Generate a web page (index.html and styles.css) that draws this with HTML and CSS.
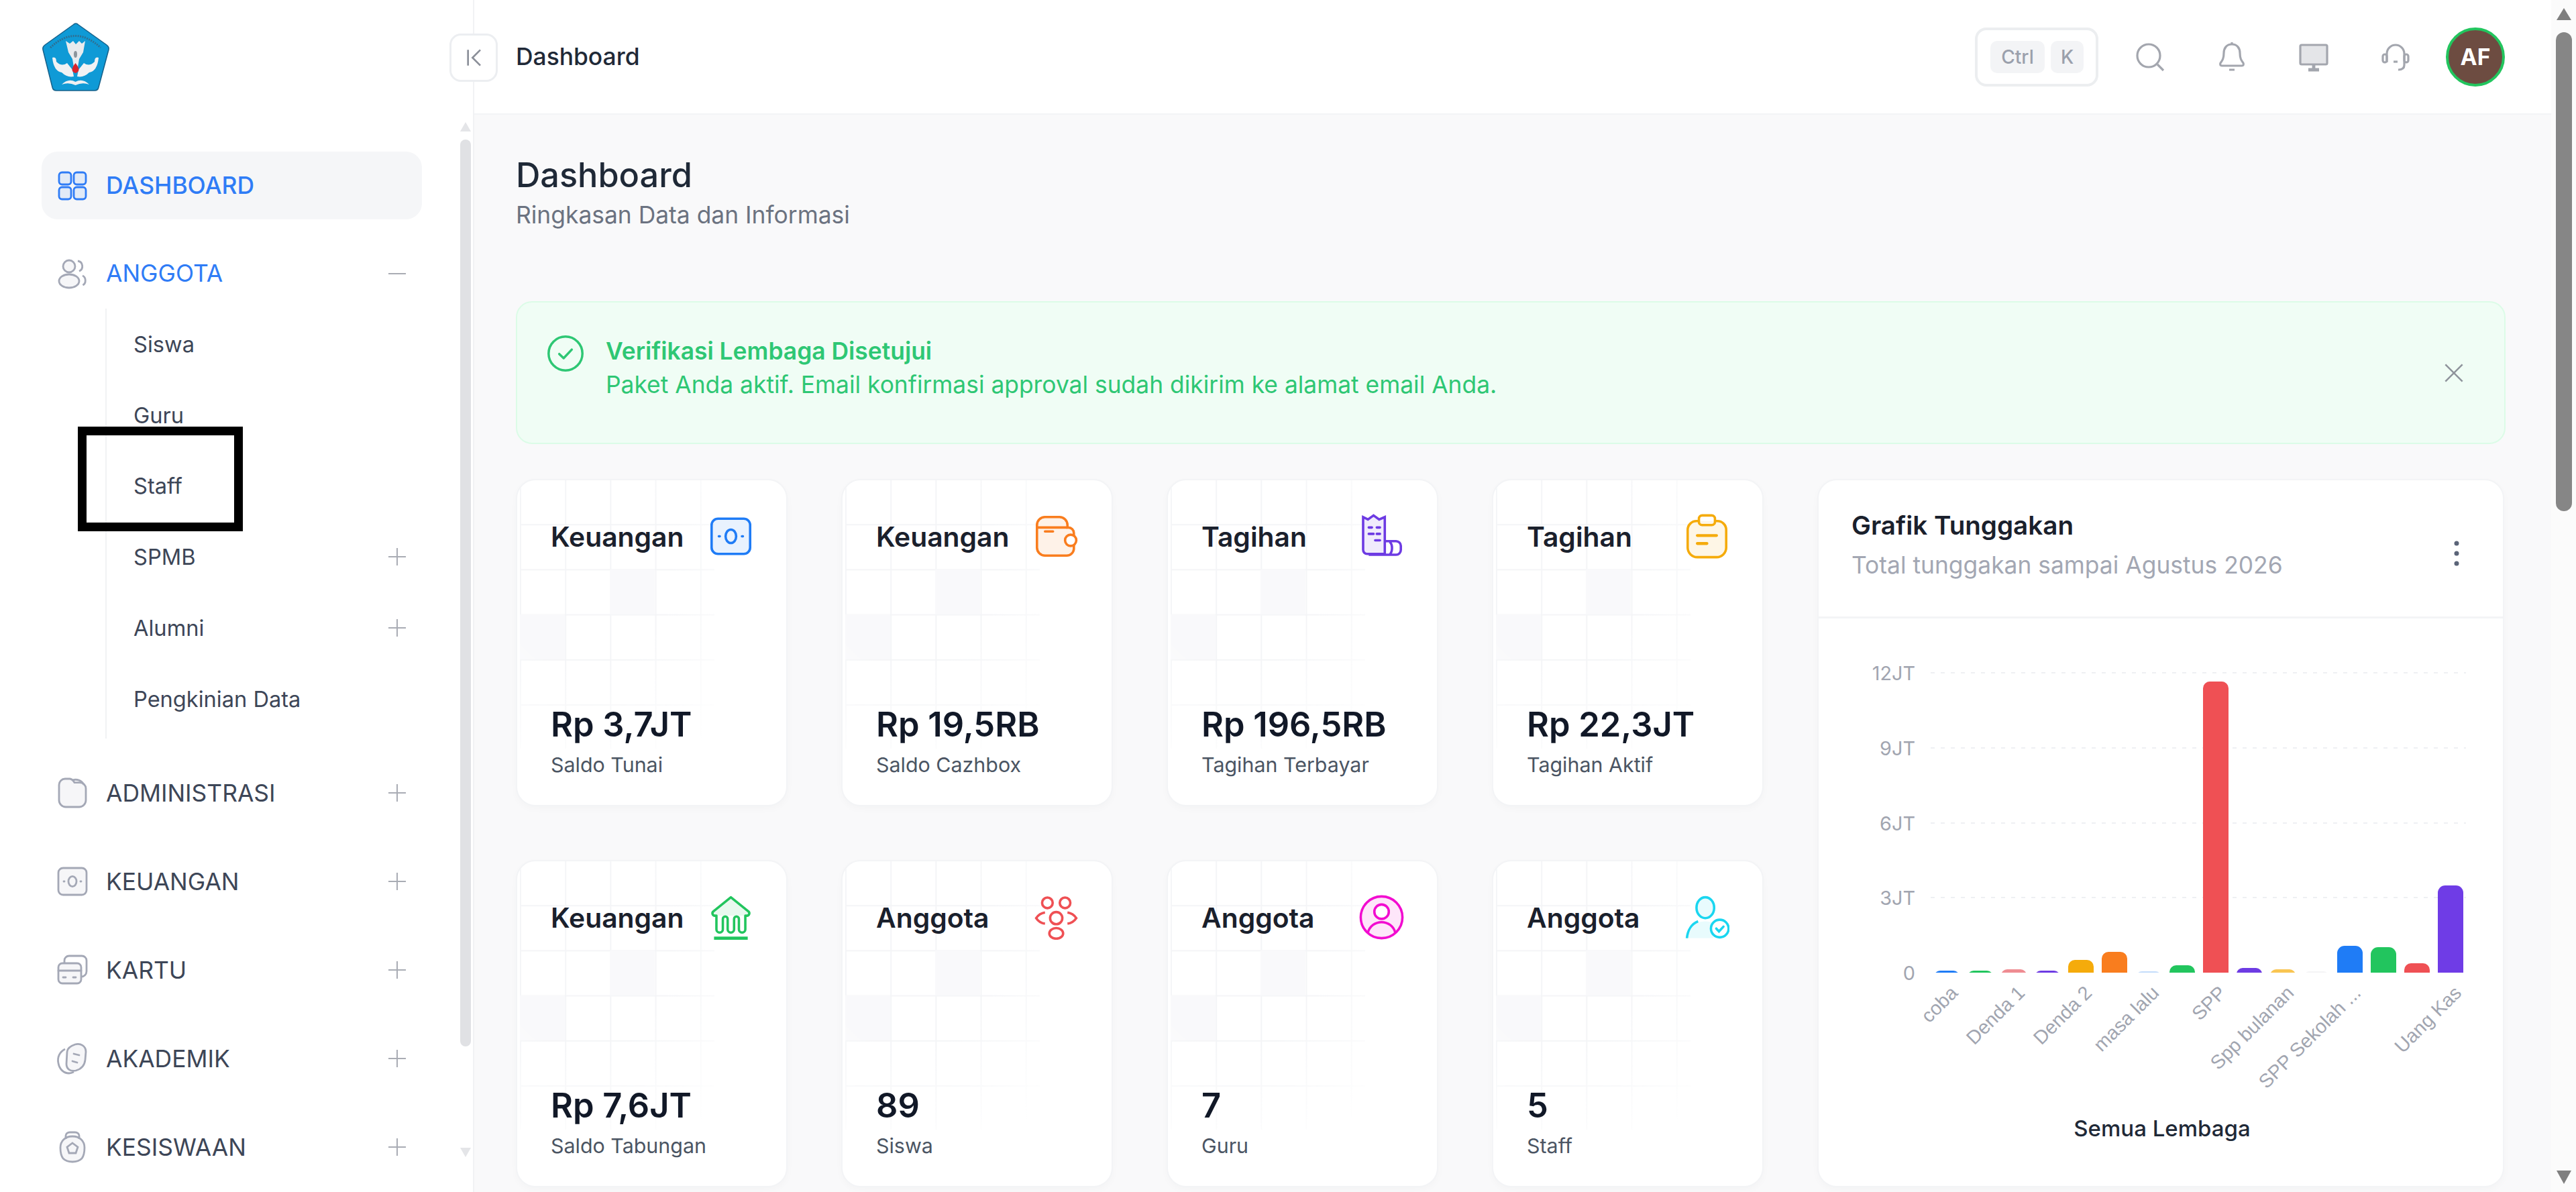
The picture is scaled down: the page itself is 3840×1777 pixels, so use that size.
FILE: index.html
```html
<!DOCTYPE html>
<html lang="id">
<head>
    <meta charset="UTF-8">
    <meta name="viewport" content="width=device-width, initial-scale=1.0">
    <title>Dashboard</title>
    <link rel="stylesheet" href="styles.css">
</head>
<body>
    <aside class="sidebar">
        <svg class="logo" viewBox="0 0 102 104">
            <path d="M51 1Q53 1 55 3L97 33Q101 36 100 40L85 96Q84 101 79 101L22 101Q17 101 16 96L2 40Q1 36 5 33L47 3Q49 1 51 1Z" fill="#0f9ad6" stroke="#17618a" stroke-width="1.5"/>
            <path d="M13 37Q50 2 88 37" fill="none" stroke="#2f6f92" stroke-width="3" stroke-dasharray="2 1.500"/>
            <path d="M36 27L42 31L47 27L51 32L56 27L60 31L65 27L62 44L56 54L54 66H48L46 54L40 44Z" fill="#e8ebee"/>
            <ellipse cx="50.500" cy="47" rx="2.500" ry="5" fill="#8c959c"/>
            <path d="M16 52Q22 50 22 58Q30 66 38 60L46 70L48 80Q38 82 30 74Q18 72 16 52Z" fill="#f0f2f4"/>
            <path d="M85 52Q79 50 79 58Q71 66 63 60L55 70L53 80Q63 82 71 74Q83 72 85 52Z" fill="#f0f2f4"/>
            <path d="M50.500 60Q57 68 55 72Q50.500 78 46 72Q44 68 50.500 60Z" fill="#d8242c"/>
            <path d="M30 92Q40 82 50.500 88Q61 82 71 92Q61 88 50.500 93Q40 88 30 92Z" fill="#eef0f2"/>
        </svg>

        <ul class="nav">
            <li class="nav-item nav-active">
                <svg class="nav-icon" viewBox="0 0 24 24" fill="currentColor" fill-opacity=".1" stroke="currentColor" stroke-width="1.4">
                    <rect x="2" y="2" width="9" height="9" rx="2.2"/><rect x="13" y="2" width="9" height="9" rx="2.2"/>
                    <rect x="2" y="13" width="9" height="9" rx="2.2"/><rect x="13" y="13" width="9" height="9" rx="2.2"/>
                </svg>
                <span>DASHBOARD</span>
            </li>
            <li class="nav-item nav-open">
                <svg class="nav-icon icon-gray" viewBox="0 0 24 24" fill="currentColor" fill-opacity=".1" stroke="currentColor" stroke-width="1.4">
                    <circle cx="9.5" cy="6.5" r="4.5"/><ellipse cx="9.5" cy="17.5" rx="7.5" ry="5"/>
                    <path d="M16 2.5a4 4 0 0 1 1 7.6M19.5 13.5c2.6 1 3 5.6 .2 7" fill="none"/>
                </svg>
                <span>ANGGOTA</span>
                <i class="toggle toggle-minus"></i>
            </li>
            <li>
                <ul class="subnav">
                    <li class="sub-item">Siswa</li>
                    <li class="sub-item">Guru</li>
                    <li class="sub-item">Staff</li>
                    <li class="sub-item"><span>SPMB</span><i class="toggle"></i></li>
                    <li class="sub-item"><span>Alumni</span><i class="toggle"></i></li>
                    <li class="sub-item">Pengkinian Data</li>
                </ul>
            </li>
            <li class="nav-item nav-group">
                <svg class="nav-icon icon-gray" viewBox="0 0 24 24" fill="currentColor" fill-opacity=".1" stroke="currentColor" stroke-width="1.4">
                    <path d="M2 6a4.500 4.500 0 0 1 4.500-4.500H10c1.500 0 2 .8 2.800 1.800l.7 1h4A4.500 4.500 0 0 1 22 8.800v8.700a5 5 0 0 1-5 5H7a5 5 0 0 1-5-5Z"/>
                    <path d="M12 2.500c3-1 7 0 8.500 3.500" fill="none"/>
                </svg>
                <span>ADMINISTRASI</span>
                <i class="toggle"></i>
            </li>
            <li class="nav-item nav-group">
                <svg class="nav-icon icon-gray" viewBox="0 0 24 24" fill="currentColor" fill-opacity=".1" stroke="currentColor" stroke-width="1.4">
                    <rect x="1.500" y="2" width="21" height="20" rx="3.500"/><ellipse cx="12" cy="12" rx="3" ry="3.800" fill="none"/>
                    <path d="M5.500 12h.5M18 12h.5" fill="none" stroke-linecap="round"/>
                </svg>
                <span>KEUANGAN</span>
                <i class="toggle"></i>
            </li>
            <li class="nav-item nav-group">
                <svg class="nav-icon icon-gray" viewBox="0 0 24 24" fill="none" stroke="currentColor" stroke-width="1.4">
                    <rect x="1.500" y="7" width="17" height="15" rx="3" fill="currentColor" fill-opacity=".1"/>
                    <path d="M1.500 12.500h17M5 17.500h2M12.500 17.500h2" stroke-linecap="round"/>
                    <path d="M6 6.500V5a3.500 3.500 0 0 1 3.500-3.500h9.500A3.500 3.500 0 0 1 22.500 5v8a4 4 0 0 1-4 4"/>
                </svg>
                <span>KARTU</span>
                <i class="toggle"></i>
            </li>
            <li class="nav-item nav-group">
                <svg class="nav-icon icon-gray" viewBox="0 0 24 24" fill="none" stroke="currentColor" stroke-width="1.4">
                    <path d="M14 1.500c4-1 8 1 8 5.500l-.5 6c-.5 5-3.500 7-7 8-4 .8-7-1-7-5l.5-9c.2-3 3-4.500 6-5.500Z" fill="currentColor" fill-opacity=".1"/>
                    <path d="M6.500 5C2.500 7 .5 11 1.500 15.500c.8 4.500 4 7.500 8 7.500 1.500 0 2.500-.5 3.500-1"/>
                    <path d="M13 8.500l4 1M12 14l3.500 1" stroke-linecap="round"/>
                </svg>
                <span>AKADEMIK</span>
                <i class="toggle"></i>
            </li>
            <li class="nav-item nav-group">
                <svg class="nav-icon icon-gray" viewBox="0 0 24 24" fill="none" stroke="currentColor" stroke-width="1.400">
                    <path d="M7 6V3.500C7 2 8.500 1 10 1h4c1.500 0 3 1 3 2.500V6"/>
                    <path d="M12 4c5.500 0 9 3.500 9 8.500 0 3-.5 6-2 8-2 2-4.500 2.500-7 2.500s-5-.5-7-2.500c-1.500-2-2-5-2-8C3 7.500 6.500 4 12 4Z" fill="currentColor" fill-opacity=".1"/>
                    <path d="M12 9l4 3-1.500 4.500h-5L8 12Z"/>
                </svg>
                <span>KESISWAAN</span>
                <i class="toggle"></i>
            </li>
        </ul>

        <div class="side-scroll">
            <i class="arrow-up"></i>
            <i class="side-thumb"></i>
            <i class="arrow-down"></i>
        </div>
        <div class="mark-box"></div>
    </aside>

    <div class="main">
        <header class="topbar">
            <button class="collapse-btn">
                <svg viewBox="0 0 24 24" fill="none" stroke="#8b8f99" stroke-width="1.600"><path d="M7 5v14M18 5l-7 7 7 7"/></svg>
            </button>
            <div class="crumb">Dashboard</div>
            <div class="shortcut"><kbd class="key-ctrl">Ctrl</kbd><kbd class="key-k">K</kbd></div>
            <svg class="top-icon" viewBox="0 0 24 24" fill="none" stroke="#a3a6ae" stroke-width="1.600">
                <circle cx="11" cy="11" r="8.500"/><path d="M17.500 17.500l4.500 4.500"/>
            </svg>
            <svg class="top-icon" viewBox="0 0 24 24" fill="none" stroke="#a3a6ae" stroke-width="1.600">
                <path d="M12 2.500c-4 0-6 3-6 6.500 0 4-1 5.500-2.500 7.500-.6 1 0 2 1 2h15c1 0 1.600-1 1-2C19 14.500 18 13 18 9c0-3.500-2-6.500-6-6.500Z"/>
                <path d="M10 21.500h4M12 1v1.500"/>
            </svg>
            <svg class="top-icon" viewBox="0 0 24 24" fill="none" stroke="#a3a6ae" stroke-width="1.600">
                <rect x="2" y="3" width="20" height="14.500" rx="1" fill="#c4c6cc" fill-opacity=".45"/>
                <path d="M12 17.500v3M8 21.500h8" stroke-width="2.400"/>
            </svg>
            <svg class="top-icon top-icon-last" viewBox="0 0 24 24" fill="none" stroke="#a3a6ae" stroke-width="1.600">
                <path d="M5.500 16V9.500a6.500 6.500 0 0 1 13 0V18c0 2.500-2 3.500-4.500 3.500"/>
                <rect x="2.500" y="10" width="3" height="6" rx="1.500"/><rect x="18.500" y="10" width="3" height="6" rx="1.500"/>
                <path d="M10.500 15.500h3"/>
            </svg>
            <div class="avatar">AF</div>
        </header>

        <main class="content">
            <h1 class="page-title">Dashboard</h1>
            <p class="page-sub">Ringkasan Data dan Informasi</p>

            <div class="alert">
                <svg class="alert-icon" viewBox="0 0 24 24" fill="none" stroke="currentColor" stroke-width="1.500">
                    <circle cx="12" cy="12" r="10.800"/><path d="M8 12.300l2.800 2.700 5.200-5.500" stroke-linecap="round" stroke-linejoin="round"/>
                </svg>
                <div class="alert-text">
                    <div class="alert-title">Verifikasi Lembaga Disetujui</div>
                    <div>Paket Anda aktif. Email konfirmasi approval sudah dikirim ke alamat email Anda.</div>
                </div>
                <svg class="alert-close" viewBox="0 0 24 24" fill="none" stroke="#8f949c" stroke-width="1.600"><path d="M4 4l16 16M20 4L4 20"/></svg>
            </div>

            <div class="grid">
                <div class="stat-card">
                    <div class="stat-head">
                        <span class="stat-title">Keuangan</span>
                        <svg class="stat-icon c-blue" viewBox="0 0 28 28" fill="none" stroke="currentColor" stroke-width="1.500">
                            <rect x="2" y="3" width="24" height="22" rx="4" fill="currentColor" fill-opacity=".1"/>
                            <ellipse cx="14" cy="14" rx="3.300" ry="4.200"/><path d="M6.500 14h.6M20.900 14h.6" stroke-linecap="round"/>
                        </svg>
                    </div>
                    <div class="stat-value">Rp 3,7JT</div>
                    <div class="stat-label">Saldo Tunai</div>
                </div>
                <div class="stat-card">
                    <div class="stat-head">
                        <span class="stat-title">Keuangan</span>
                        <svg class="stat-icon c-orange" viewBox="0 0 28 28" fill="none" stroke="currentColor" stroke-width="1.500">
                            <path d="M2 7a5 5 0 0 1 5-5h9a5 5 0 0 1 5 5v1.500h.5A3.500 3.500 0 0 1 25 12v10a4.500 4.500 0 0 1-4.500 4H7a5 5 0 0 1-5-5Z" fill="currentColor" fill-opacity=".1"/>
                            <path d="M2.500 8.500H21M7 11h5" stroke-linecap="round"/>
                            <circle cx="23" cy="16.500" r="3.500" fill="#fff"/>
                        </svg>
                    </div>
                    <div class="stat-value">Rp 19,5RB</div>
                    <div class="stat-label">Saldo Cazhbox</div>
                </div>
                <div class="stat-card">
                    <div class="stat-head">
                        <span class="stat-title">Tagihan</span>
                        <svg class="stat-icon c-purple" viewBox="0 0 28 28" fill="none" stroke="currentColor" stroke-width="1.500">
                            <path d="M2.500 2l3 1.500L9 1l3.500 2.500L16 2v23H5a2.500 2.500 0 0 1-2.500-2.500Z" fill="currentColor" fill-opacity=".1"/>
                            <path d="M16 17h7a3 3 0 0 1 3 3v2.500a3 3 0 0 1-3 3H6M19 17.500c2 1.500 2 6 0 8"/>
                            <path d="M6 8.500h2M11 8.500h2M6 12.500h3M11 12.500h2M10 16.500h3" stroke-linecap="round"/>
                        </svg>
                    </div>
                    <div class="stat-value">Rp 196,5RB</div>
                    <div class="stat-label">Tagihan Terbayar</div>
                </div>
                <div class="stat-card">
                    <div class="stat-head">
                        <span class="stat-title">Tagihan</span>
                        <svg class="stat-icon c-amber" viewBox="0 0 28 28" fill="none" stroke="currentColor" stroke-width="1.500">
                            <path d="M9 4.500H7.500A5.500 5.500 0 0 0 2 10v11a6 6 0 0 0 6 6h12a6 6 0 0 0 6-6V10a5.500 5.500 0 0 0-5.500-5.500H19" fill="currentColor" fill-opacity=".1"/>
                            <rect x="9" y="1" width="10" height="6" rx="2"/>
                            <path d="M8 13.500h12M8 18.500h6" stroke-linecap="round" stroke-width="1.800"/>
                        </svg>
                    </div>
                    <div class="stat-value">Rp 22,3JT</div>
                    <div class="stat-label">Tagihan Aktif</div>
                </div>

                <section class="chart-card">
                    <div class="chart-head">
                        <div>
                            <h2 class="chart-title">Grafik Tunggakan</h2>
                            <p class="chart-sub">Total tunggakan sampai Agustus 2026</p>
                        </div>
                        <svg class="kebab" viewBox="0 0 10 40" fill="#5b6478"><circle cx="5" cy="5" r="3.500"/><circle cx="5" cy="20" r="3.500"/><circle cx="5" cy="35" r="3.500"/></svg>
                    </div>
                    <svg class="chart" viewBox="0 0 1024 852">
                        <defs><clipPath id="above-axis"><rect x="0" y="0" width="1024" height="530"/></clipPath></defs>
                        <g class="grid-lines">
                            <line x1="169" x2="967" y1="83" y2="83"/>
                            <line x1="169" x2="967" y1="195" y2="195"/>
                            <line x1="169" x2="967" y1="307" y2="307"/>
                            <line x1="169" x2="967" y1="418" y2="418"/>
                        </g>
                        <g class="y-labels">
                            <text x="146" y="94">12JT</text>
                            <text x="146" y="206">9JT</text>
                            <text x="146" y="318">6JT</text>
                            <text x="146" y="429">3JT</text>
                            <text x="146" y="541">0</text>
                        </g>
                        <g clip-path="url(#above-axis)">
                            <rect x="174" y="527" width="38" height="23" rx="9" fill="#1f7cf6"/>
                            <rect x="224" y="527" width="38" height="23" rx="9" fill="#22c55e"/>
                            <rect x="274" y="525" width="38" height="23" rx="9" fill="#ef8c92"/>
                            <rect x="324" y="527" width="38" height="23" rx="9" fill="#6d3be3"/>
                            <rect x="374" y="511" width="38" height="39" rx="10" fill="#f5ab0b"/>
                            <rect x="424" y="499" width="38" height="51" rx="10" fill="#f97d1e"/>
                            <rect x="475" y="528" width="38" height="22" rx="9" fill="#c3dcfb"/>
                            <rect x="525" y="519" width="38" height="31" rx="10" fill="#22c55e"/>
                            <rect x="575" y="96" width="38" height="454" rx="10" fill="#ef5054"/>
                            <rect x="625" y="523" width="38" height="27" rx="9" fill="#6d3be3"/>
                            <rect x="675" y="525" width="38" height="25" rx="9" fill="#f9c552"/>
                            <rect x="725" y="528" width="38" height="22" rx="9" fill="#f4f4f5"/>
                            <rect x="775" y="490" width="38" height="60" rx="11" fill="#1f7cf6"/>
                            <rect x="825" y="492" width="38" height="58" rx="11" fill="#22c55e"/>
                            <rect x="875" y="516" width="38" height="34" rx="10" fill="#ef5054"/>
                            <rect x="925" y="400" width="38" height="150" rx="11" fill="#6f3ce6"/>
                        </g>
                        <g class="x-labels">
                            <text transform="translate(211 562) rotate(-45)">coba</text>
                            <text transform="translate(311 562) rotate(-45)">Denda 1</text>
                            <text transform="translate(411 562) rotate(-45)">Denda 2</text>
                            <text transform="translate(511 562) rotate(-45)">masa lalu</text>
                            <text transform="translate(611 562) rotate(-45)">SPP</text>
                            <text transform="translate(712 562) rotate(-45)">Spp bulanan</text>
                            <text transform="translate(812 562) rotate(-45)">SPP Sekolah ...</text>
                            <text transform="translate(962 562) rotate(-45)">Uang Kas</text>
                        </g>
                        <text class="x-title" x="514" y="774">Semua Lembaga</text>
                    </svg>
                </section>

                <div class="stat-card">
                    <div class="stat-head">
                        <span class="stat-title">Keuangan</span>
                        <svg class="stat-icon c-green" viewBox="0 0 28 28" fill="none" stroke="currentColor" stroke-width="1.500" stroke-linejoin="round">
                            <path d="M5 13H4a1.500 1.500 0 0 1-1-2.600L14 1.500l11 8.900a1.500 1.500 0 0 1-1 2.600H23Z" fill="currentColor" fill-opacity=".1" stroke="none"/>
                            <path d="M5 13H4a1.500 1.500 0 0 1-1-2.600L14 1.500l11 8.900a1.500 1.500 0 0 1-1 2.600H23V21.500a2 2 0 0 1-4 0V15a1.500 1.500 0 0 0-3 0V21.500a2 2 0 0 1-4 0V15a1.500 1.500 0 0 0-3 0V21.500a2 2 0 0 1-4 0Z"/>
                            <path d="M3.500 27h21" stroke-width="2"/>
                        </svg>
                    </div>
                    <div class="stat-value">Rp 7,6JT</div>
                    <div class="stat-label">Saldo Tabungan</div>
                </div>
                <div class="stat-card">
                    <div class="stat-head">
                        <span class="stat-title">Anggota</span>
                        <svg class="stat-icon c-red" viewBox="0 0 28 28" fill="none" stroke="currentColor" stroke-width="1.500">
                            <circle cx="8.500" cy="5" r="3.300"/><circle cx="19.500" cy="5" r="3.300"/>
                            <circle cx="14" cy="14.500" r="3.800"/><ellipse cx="14" cy="24" rx="4.300" ry="3.300"/>
                            <path d="M7 11c-3 .5-4.500 2-5.500 3.500 1 1.500 2.500 3 5.500 3.500M21 11c3 .5 4.500 2 5.500 3.500-1 1.500-2.500 3-5.500 3.500"/>
                        </svg>
                    </div>
                    <div class="stat-value">89</div>
                    <div class="stat-label">Siswa</div>
                </div>
                <div class="stat-card">
                    <div class="stat-head">
                        <span class="stat-title">Anggota</span>
                        <svg class="stat-icon c-pink" viewBox="0 0 28 28" fill="none" stroke="currentColor" stroke-width="1.500">
                            <circle cx="14" cy="14" r="13" fill="currentColor" fill-opacity=".1"/>
                            <circle cx="14" cy="10.500" r="4.500" fill="#fff"/>
                            <path d="M5.500 23.500c1-4 4.500-6.500 8.500-6.500s7.500 2.500 8.500 6.500"/>
                        </svg>
                    </div>
                    <div class="stat-value">7</div>
                    <div class="stat-label">Guru</div>
                </div>
                <div class="stat-card">
                    <div class="stat-head">
                        <span class="stat-title">Anggota</span>
                        <svg class="stat-icon c-cyan" viewBox="0 0 28 28" fill="none" stroke="currentColor" stroke-width="1.500">
                            <ellipse cx="13" cy="8" rx="5.500" ry="6.500" fill="currentColor" fill-opacity=".1"/>
                            <path d="M2 27c.5-6 4.500-10.500 11-10.500 2 0 3.500.5 5 1L18 27Z" fill="currentColor" fill-opacity=".1" stroke="none"/>
                            <path d="M1.500 27c.5-5 3-9 7-10.500"/>
                            <circle cx="22" cy="21" r="5.500" fill="#fff"/>
                            <path d="M19.800 21l1.700 1.800 2.800-3" stroke-linecap="round"/>
                        </svg>
                    </div>
                    <div class="stat-value">5</div>
                    <div class="stat-label">Staff</div>
                </div>
            </div>
        </main>
    </div>

    <div class="page-scroll">
        <i class="arrow-up"></i>
        <i class="page-thumb"></i>
        <i class="arrow-down"></i>
    </div>
</body>
</html>
```

FILE: styles.css
```css
* {
    box-sizing: border-box;
}
html, body {
    height: 1777px;
    margin: 0;
    overflow: hidden;
}
body {
    display: flex;
    font-family: Inter, "Noto Sans", sans-serif;
    font-size: 35.4px;
    color: #1f2937;
    background: #fff;
}
ul {
    list-style: none;
    margin: 0;
    padding: 0;
}

/* sidebar */
.sidebar {
    position: relative;
    width: 707px;
    height: 1777px;
    padding: 34px 0 0 62px;
    border-right: 2px solid #f1f2f4;
    overflow: hidden;
    flex-shrink: 0;
}
.logo {
    display: block;
    width: 102px;
    height: 104px;
    margin-bottom: 88px;
}
.nav {
    width: 567px;
}
.nav-item {
    display: flex;
    align-items: center;
    gap: 26px;
    height: 101px;
    padding: 0 24px 0 22px;
    border-radius: 24px;
    color: #3d4657;
    font-weight: 400;
}
.nav-item span {
    flex: 1;
}
.nav-active {
    background: #f5f6f8;
    color: #2f7cf6;
    font-weight: 500;
    margin-bottom: 30px;
}
.nav-open {
    color: #2f7cf6;
}
.nav-group {
    margin-top: 31px;
}
.nav-icon {
    width: 48px;
    height: 48px;
    flex-shrink: 0;
}
.icon-gray {
    color: #a4a8b6;
}
.toggle {
    position: relative;
    display: block;
    width: 26px;
    height: 26px;
    flex-shrink: 0;
}
.toggle::before, .toggle::after {
    content: "";
    position: absolute;
    background: #a9acb4;
}
.toggle::before {
    left: 0;
    right: 0;
    top: 12px;
    height: 2px;
}
.toggle::after {
    top: 0;
    bottom: 0;
    left: 12px;
    width: 2px;
}
.toggle-minus::after {
    display: none;
}
.subnav {
    margin-top: 2px;
    margin-left: 95px;
    padding-bottom: 6px;
    border-left: 2px solid #f1f2f4;
}
.sub-item {
    display: flex;
    align-items: center;
    justify-content: space-between;
    height: 105.8px;
    padding: 0 24px 0 40px;
    color: #3d4657;
    font-size: 32.6px;
}
.side-scroll {
    position: absolute;
    top: 182px;
    left: 686px;
    width: 16px;
    height: 1544px;
    display: flex;
    flex-direction: column;
    align-items: center;
    color: #e4e5e8;
}
.side-thumb {
    display: block;
    width: 16px;
    height: 1352px;
    margin: 12px 0 151px;
    border-radius: 8px;
    background: #e0e1e4;
}
.arrow-up, .arrow-down {
    display: block;
    width: 0;
    height: 0;
    border-left: 8px solid transparent;
    border-right: 8px solid transparent;
}
.arrow-up {
    border-bottom: 14px solid currentColor;
}
.arrow-down {
    border-top: 14px solid currentColor;
}
.mark-box {
    position: absolute;
    left: 116px;
    top: 636px;
    width: 246px;
    height: 156px;
    border: 13px solid #000;
}

/* top bar */
.main {
    flex: 1;
    min-width: 0;
    height: 1777px;
    background: #f9f9fa;
}
.topbar {
    position: relative;
    display: flex;
    align-items: center;
    height: 171px;
    padding: 0 69px 0 62px;
    background: #fff;
    border-bottom: 2px solid #f3f4f6;
}
.collapse-btn {
    position: absolute;
    left: -37px;
    top: 50px;
    display: flex;
    align-items: center;
    justify-content: center;
    width: 72px;
    height: 72px;
    padding: 0;
    background: #fff;
    border: 3px solid #eceef1;
    border-radius: 17px;
}
.collapse-btn svg {
    width: 40px;
    height: 40px;
}
.crumb {
    flex: 1;
    font-weight: 500;
    color: #1f2937;
}
.shortcut {
    display: flex;
    align-items: center;
    gap: 9px;
    width: 184px;
    height: 88px;
    padding-left: 19px;
    margin-right: 53px;
    border: 4px solid #eceef0;
    border-radius: 17px;
}
.shortcut kbd {
    display: flex;
    align-items: center;
    justify-content: center;
    height: 48px;
    border-radius: 10px;
    background: #f3f4f6;
    color: #9aa0ac;
    font-family: Inter, sans-serif;
    font-size: 28px;
    font-weight: 500;
}
.key-ctrl {
    width: 81px;
}
.key-k {
    width: 49px;
}
.top-icon {
    width: 48px;
    height: 48px;
    margin-right: 74px;
}
.top-icon-last {
    margin-right: 51px;
}
.avatar {
    display: flex;
    align-items: center;
    justify-content: center;
    width: 88px;
    height: 88px;
    border: 4px solid #22c55e;
    border-radius: 50%;
    background: #6d4c41;
    color: #fff;
    font-size: 33.6px;
    font-weight: 700;
}

/* content */
.content {
    padding: 58px 68px 0 62px;
}
.page-title {
    margin: 0;
    font-size: 50.4px;
    font-weight: 500;
    line-height: 64px;
    color: #1f2937;
}
.page-sub {
    margin: 6px 0 0;
    line-height: 44px;
    color: #6b7280;
}
.alert {
    display: flex;
    align-items: flex-start;
    height: 213px;
    margin-top: 106px;
    padding: 48px 50px 0 44px;
    border: 2px solid #dcfce7;
    border-radius: 24px;
    background: #f0fdf5;
    color: #2ec774;
    line-height: 50px;
}
.alert-icon {
    width: 56px;
    height: 56px;
    margin-right: 32px;
    flex-shrink: 0;
}
.alert-text {
    flex: 1;
}
.alert-title {
    font-weight: 600;
}
.alert-close {
    width: 38px;
    height: 38px;
    margin-top: 38px;
    margin-right: 6px;
}
.grid {
    display: grid;
    grid-template-columns: repeat(4, 405px) 1024px;
    grid-template-rows: 488px 488px;
    gap: 80px;
    margin-top: 52px;
}

/* stat cards */
.stat-card {
    position: relative;
    display: flex;
    flex-direction: column;
    padding: 50px 49px 40px 50px;
    border: 2px solid #f3f4f6;
    border-radius: 29px;
    background: #fff;
    box-shadow: 0 4px 12px rgba(0, 0, 0, .025);
    overflow: hidden;
}
.stat-card::before {
    content: "";
    position: absolute;
    left: 4px;
    top: 0;
    width: 290px;
    height: 400px;
    background:
        linear-gradient(#f9f9fb, #f9f9fb) 134px 133px / 67px 67px no-repeat,
        linear-gradient(#f9f9fb, #f9f9fb) 0 200px / 67px 67px no-repeat,
        linear-gradient(#f4f5f7 2px, transparent 2px) 0 -2px / 67.2px 67.2px,
        linear-gradient(90deg, #f4f5f7 2px, transparent 2px) 0 0 / 67.2px 67.2px;
    -webkit-mask-image: radial-gradient(ellipse 280px 330px at 100px 130px, #000 45%, transparent 100%);
    mask-image: radial-gradient(ellipse 280px 330px at 100px 130px, #000 45%, transparent 100%);
}
.stat-head, .stat-value, .stat-label {
    position: relative;
}
.stat-head {
    display: flex;
    align-items: center;
    justify-content: space-between;
    height: 67px;
}
.stat-title {
    font-size: 40.8px;
    font-weight: 600;
    color: #1a202c;
}
.stat-icon {
    width: 67px;
    height: 67px;
}
.c-blue { color: #1f7cf6; }
.c-orange { color: #f97d1e; }
.c-purple { color: #6d3be3; }
.c-amber { color: #f5ab0b; }
.c-green { color: #22c55e; }
.c-red { color: #ef5054; }
.c-pink { color: #f20cd0; }
.c-cyan { color: #1ad6f0; }
.stat-value {
    margin-top: auto;
    font-size: 50.6px;
    font-weight: 600;
    line-height: 60px;
    color: #111827;
}
.stat-label {
    margin-top: 10px;
    font-size: 30.4px;
    line-height: 40px;
    color: #4b5563;
}

/* chart */
.chart-card {
    grid-column: 5;
    grid-row: 1 / span 2;
    border: 2px solid #f3f4f6;
    border-radius: 29px;
    background: #fff;
    box-shadow: 0 4px 12px rgba(0, 0, 0, .025);
    overflow: hidden;
}
.chart-head {
    display: flex;
    align-items: center;
    justify-content: space-between;
    height: 206px;
    padding: 0 64px 9px 49px;
    border-bottom: 3px solid #f3f4f6;
}
.chart-title {
    margin: 0;
    font-size: 38.6px;
    font-weight: 600;
    line-height: 50px;
    color: #1a202c;
}
.chart-sub {
    margin: 10px 0 0;
    line-height: 50px;
    color: #a3a7b3;
}
.kebab {
    width: 10px;
    height: 40px;
    margin-top: 24px;
}
.chart {
    display: block;
    width: 1024px;
    height: 852px;
    margin: -2px 0 0 -2px;
}
.grid-lines line {
    stroke: #eef0f3;
    stroke-width: 2;
    stroke-dasharray: 6 9;
}
.y-labels text {
    font-size: 28.8px;
    fill: #a1a5b0;
    text-anchor: end;
}
.x-labels text {
    font-family: "Liberation Sans", sans-serif;
    font-size: 28.8px;
    fill: #a1a5b0;
    text-anchor: end;
}
.x-title {
    font-size: 33px;
    font-weight: 500;
    fill: #1f2937;
    text-anchor: middle;
}

/* page scrollbar */
.page-scroll {
    display: flex;
    flex-direction: column;
    align-items: center;
    width: 37px;
    height: 1777px;
    padding-top: 12px;
    background: #fbfbfb;
    color: #7f7f7f;
    flex-shrink: 0;
}
.page-scroll .arrow-up, .page-scroll .arrow-down {
    border-left-width: 11px;
    border-right-width: 11px;
}
.page-scroll .arrow-up {
    border-bottom-width: 18px;
}
.page-scroll .arrow-down {
    border-top-width: 20px;
}
.page-thumb {
    display: block;
    width: 24px;
    height: 714px;
    margin: 18px 0 983px;
    border-radius: 12px;
    background: #868686;
}
```
